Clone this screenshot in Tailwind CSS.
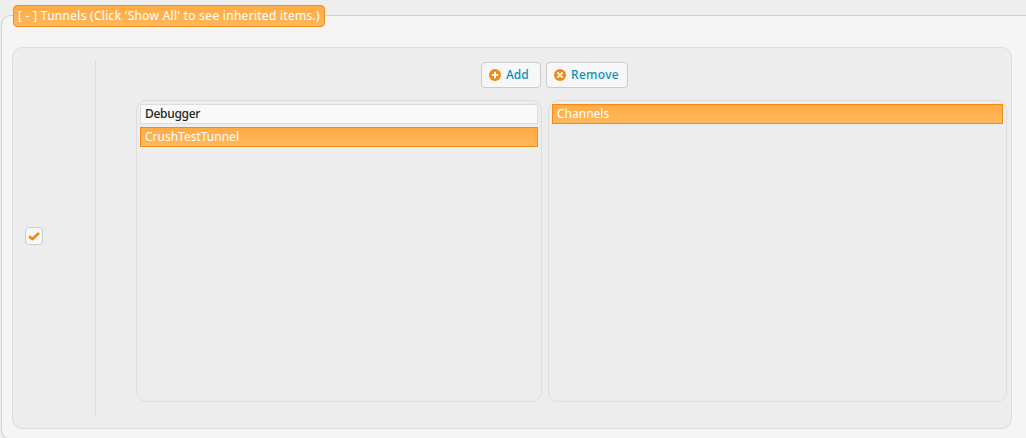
<!DOCTYPE html>
<html>
<head>
<meta charset="utf-8">
<script src="https://cdn.jsdelivr.net/npm/@tailwindcss/browser@4"></script>
</head>
<body class="w-[1026px] h-[438px] overflow-hidden bg-[#eeeeee] font-['Noto_Sans',sans-serif] text-[12px]">
<div class="pt-[15px] pl-[1px] h-[438px]">
  <div class="w-[1040px] h-[425px] bg-[#f5f5f5] border border-[#cfcfcf] rounded-[10px] pl-[10px]">
    <div class="ml-[1px] -mt-[11px] mb-[20px] w-[312px] h-[22px] rounded-[4px] border border-[#f28c14] bg-gradient-to-b from-[#fdab45] to-[#ffb85c] text-white pl-[4px] leading-[20px] tracking-[0.28px] whitespace-nowrap">[ - ] Tunnels (Click 'Show All' to see inherited items.)</div>
    <div class="w-[1000px] h-[382px] bg-[#ededed] border border-[#dddddd] rounded-[10px] flex">
      <div class="w-[83px] mt-[12px] mb-[12px] border-r border-[#dddddd] flex items-center pl-[12px] pb-[4px]">
        <div class="w-[18px] h-[18px] rounded-[4px] border border-[#cccccc] bg-[#f8f8f8] flex items-center justify-center">
          <svg width="12" height="10" viewBox="0 0 12 10"><path d="M1 5.4 L4.4 8 L11 2" fill="none" stroke="#f28a12" stroke-width="2.6"/></svg>
        </div>
      </div>
      <div class="flex-1 pl-[40px] pr-[4px]">
        <div class="flex pl-[345px] gap-[5px] pt-[14px] h-[52px]">
          <button class="w-[60px] h-[26px] rounded-[4px] border border-[#cccccc] bg-[#f7f7f7] flex items-center gap-[5px] pl-[7px] text-[#0b8fb8] font-medium">
            <svg width="12" height="12" viewBox="0 0 12 12"><circle cx="6" cy="6" r="6" fill="#f28a12"/><path d="M6 2.8v6.4M2.8 6h6.4" stroke="#fff" stroke-width="1.9"/></svg>
            <span>Add</span>
          </button>
          <button class="w-[82px] h-[26px] rounded-[4px] border border-[#cccccc] bg-[#f7f7f7] flex items-center gap-[5px] pl-[7px] text-[#0b8fb8] tracking-[0.3px] font-medium">
            <svg width="12" height="12" viewBox="0 0 12 12"><circle cx="6" cy="6" r="6" fill="#f28a12"/><path d="M3.4 3.4l5.2 5.2M8.6 3.4l-5.2 5.2" stroke="#fff" stroke-width="1.7"/></svg>
            <span>Remove</span>
          </button>
        </div>
        <div class="flex gap-[6px]">
          <div class="w-[406px] h-[302px] rounded-[10px] border border-[#dddddd] p-[3px] flex flex-col gap-[3px]">
            <div class="h-[20px] border border-[#dddddd] bg-[#f9f9f9] text-[#222222] font-medium pl-[4px] leading-[18px] tracking-[-0.3px]">Debugger</div>
            <div class="h-[20px] border border-[#f28c14] bg-gradient-to-b from-[#fdab45] to-[#ffb85c] text-white pl-[4px] leading-[18px]">CrushTestTunnel</div>
          </div>
          <div class="w-[459px] h-[302px] rounded-[10px] border border-[#dddddd] p-[3px]">
            <div class="h-[20px] border border-[#f28c14] bg-gradient-to-b from-[#fdab45] to-[#ffb85c] text-white pl-[4px] leading-[18px]">Channels</div>
          </div>
        </div>
      </div>
    </div>
  </div>
</div>
</body>
</html>
